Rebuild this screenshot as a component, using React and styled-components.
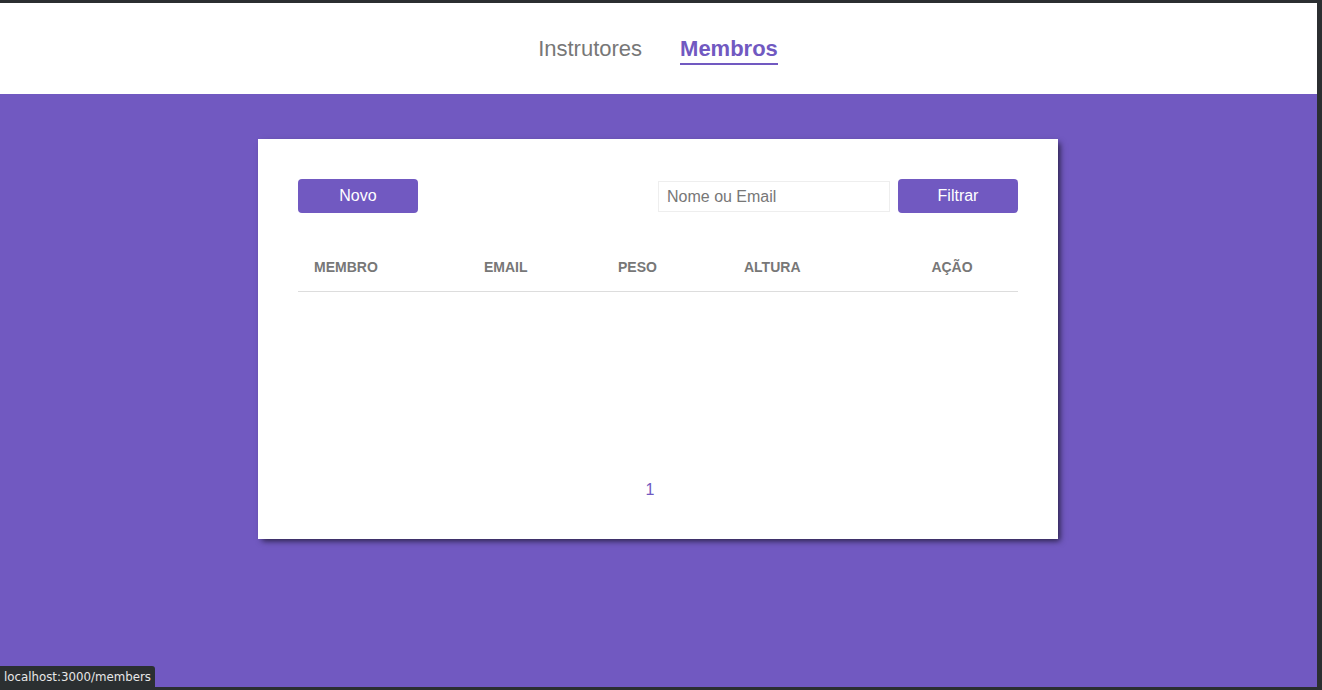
import React from 'react';
import styled, { createGlobalStyle } from 'styled-components';

const GlobalStyle = createGlobalStyle`
    * {
        margin: 0;
        padding: 0;
        box-sizing: border-box;
    }

    body {
        background: #2b2f31;
        font-family: "Liberation Sans", Arial, sans-serif;
    }
`;

const Frame = styled.div`
    height: 690px;
    padding: 3px 5px 3px 0;
    display: flex;
    flex-direction: column;
    position: relative;
`;

const Page = styled.div`
    flex: 1;
    display: flex;
    flex-direction: column;
    background: #7159c1;
`;

const Header = styled.header`
    background: white;
    height: 91px;
    display: flex;
    justify-content: center;
    align-items: center;
`;

const Links = styled.nav`
    display: flex;
    gap: 38px;
    margin-right: 1px;
    font-size: 22px;
`;

const NavLink = styled.a`
    position: relative;
    text-decoration: none;
    color: ${props => props.active ? '#7159c1' : '#777'};
    font-weight: ${props => props.active ? 'bold' : 'normal'};

    &::after {
        content: "";
        display: ${props => props.active ? 'block' : 'none'};
        position: absolute;
        left: 0;
        right: 0;
        bottom: -3px;
        height: 2px;
        background: #7159c1;
    }
`;

const Main = styled.main`
    padding: 45px 1px 0 0;
`;

const Card = styled.section`
    width: 800px;
    height: 400px;
    margin: 0 auto;
    background: white;
    padding: 40px;
    display: flex;
    flex-direction: column;
    box-shadow: 3px 3px 6px -1px rgba(0, 0, 0, 0.65);
`;

const Toolbar = styled.div`
    display: flex;
    justify-content: space-between;
    align-items: center;
    margin-bottom: 30px;
`;

const Button = styled.button`
    width: 120px;
    height: 34px;
    border: 0;
    border-radius: 4px;
    background: #7159c1;
    color: white;
    font-family: inherit;
    font-size: 16px;
`;

const Filter = styled.form`
    display: flex;
    align-items: center;
    gap: 8px;
`;

const Input = styled.input`
    width: 232px;
    height: 31px;
    border: 1px solid #eee;
    padding: 1px 8px 0;
    font-family: inherit;
    font-size: 16px;
    color: #555;
    outline: none;

    &::placeholder {
        color: #777;
    }
`;

const Table = styled.table`
    width: 100%;
    border-spacing: 0;
    table-layout: fixed;
`;

const Th = styled.th`
    width: ${props => props.w}px;
    padding: 16px;
    text-align: ${props => props.center ? 'center' : 'left'};
    text-transform: uppercase;
    color: #777;
    font-size: 14px;
    border-bottom: 1px solid #ddd;
`;

const Pagination = styled.div`
    margin-top: auto;
    display: flex;
    justify-content: center;
    padding-right: 16px;
    line-height: 18px;

    a {
        color: #7159c1;
        text-decoration: none;
        font-size: 16px;
    }
`;

const StatusTip = styled.div`
    position: absolute;
    left: 0;
    bottom: 3px;
    height: 21px;
    padding: 0 4px;
    display: flex;
    align-items: center;
    background: #2b2f31;
    color: #e8e8e8;
    font-family: "DejaVu Sans", sans-serif;
    font-size: 11.8px;
    border-radius: 0 3px 0 0;
`;

const columns = [
    { label: 'Membro', w: 170 },
    { label: 'Email', w: 134 },
    { label: 'Peso', w: 126 },
    { label: 'Altura', w: 158 },
    { label: 'Ação', w: 132, center: true },
];

export default () => {
    return <Frame>
        <GlobalStyle />
        <Page>
            <Header>
                <Links>
                    <NavLink href="#">Instrutores</NavLink>
                    <NavLink href="#" active>Membros</NavLink>
                </Links>
            </Header>
            <Main>
                <Card>
                    <Toolbar>
                        <Button>Novo</Button>
                        <Filter onSubmit={e => e.preventDefault()}>
                            <Input placeholder="Nome ou Email" />
                            <Button>Filtrar</Button>
                        </Filter>
                    </Toolbar>
                    <Table>
                        <thead>
                            <tr>
                                {columns.map(c => <Th key={c.label} w={c.w} center={c.center}>{c.label}</Th>)}
                            </tr>
                        </thead>
                        <tbody />
                    </Table>
                    <Pagination>
                        <a href="#">1</a>
                    </Pagination>
                </Card>
            </Main>
        </Page>
        <StatusTip>localhost:3000/members</StatusTip>
    </Frame>;
};
